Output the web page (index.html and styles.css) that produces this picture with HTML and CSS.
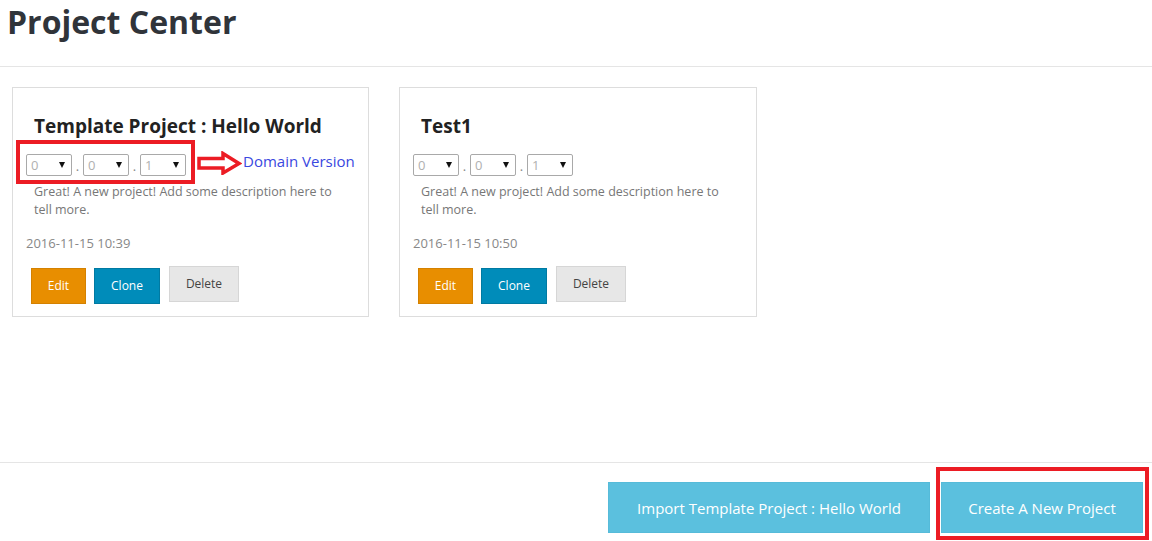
FILE: index.html
```html
<!DOCTYPE html>
<html>
<head>
<meta charset="utf-8">
<link rel="stylesheet" href="styles.css">
</head>
<body>
<div class="page">
  <header class="head">
    <h1 class="title">Project Center</h1>
  </header>
  <main class="projects">
    <div class="card">
      <h2 class="card-title">Template Project : Hello World</h2>
      <div class="version">
        <div class="sel"><span class="val">0</span><span class="tri"></span></div>
        <span class="dot">.</span>
        <div class="sel"><span class="val">0</span><span class="tri"></span></div>
        <span class="dot">.</span>
        <div class="sel"><span class="val">1</span><span class="tri"></span></div>
        <svg class="arrow" width="46" height="24" viewBox="0 0 46 24">
          <polygon points="3,7.5 27,7.5 27,2.5 43,12.5 27,22 27,17 3,17" fill="#fff" stroke="#ec1c24" stroke-width="3.5" stroke-linejoin="miter"/>
        </svg>
        <a class="domain">Domain Version</a>
      </div>
      <div class="mark mark-version"></div>
      <p class="desc">Great! A new project! Add some description here to tell more.</p>
      <div class="date">2016-11-15 10:39</div>
      <div class="actions">
        <a class="btn btn-edit">Edit</a>
        <a class="btn btn-clone">Clone</a>
        <button class="btn btn-delete">Delete</button>
      </div>
    </div>
    <div class="card">
      <h2 class="card-title">Test1</h2>
      <div class="version">
        <div class="sel"><span class="val">0</span><span class="tri"></span></div>
        <span class="dot">.</span>
        <div class="sel"><span class="val">0</span><span class="tri"></span></div>
        <span class="dot">.</span>
        <div class="sel"><span class="val">1</span><span class="tri"></span></div>
      </div>
      <p class="desc">Great! A new project! Add some description here to tell more.</p>
      <div class="date">2016-11-15 10:50</div>
      <div class="actions">
        <a class="btn btn-edit">Edit</a>
        <a class="btn btn-clone">Clone</a>
        <button class="btn btn-delete">Delete</button>
      </div>
    </div>
  </main>
  <footer class="foot">
    <button class="big big-import">Import Template Project : Hello World</button>
    <button class="big big-create">Create A New Project</button>
    <div class="mark mark-create"></div>
  </footer>
</div>
</body>
</html>
```
FILE: styles.css
```css
* { box-sizing: border-box; }
html, body { margin: 0; padding: 0; background: #fff; }
body { font-family: "Open Sans", "Liberation Sans", sans-serif; color: #333; }
.page { width: 1152px; height: 541px; position: relative; overflow: hidden; }

.head {
  height: 67px;
  border-bottom: 1px solid #e5e5e5;
  padding: 0 7px;
}
.title {
  margin: 0;
  font-size: 32px;
  font-weight: 700;
  line-height: 44px;
  color: #30343a;
}

.projects {
  height: 395px;
  padding: 20px 12px 0;
  display: flex;
  align-items: flex-start;
  gap: 30px;
}
.card {
  width: 357px;
  height: 230px;
  border: 1px solid #dddddd;
  padding: 24px 13px 0;
  position: relative;
}
.card + .card { width: 358px; }
.card-title {
  margin: 0 0 0 8px;
  font-size: 19px;
  line-height: 28px;
  font-weight: 700;
  color: #222;
}
.version {
  margin-top: 14px;
  height: 22px;
  display: flex;
  align-items: flex-start;
}
.sel {
  width: 46px;
  height: 22px;
  border: 1px solid #a9a9a9;
  border-radius: 2px;
  display: flex;
  align-items: center;
  justify-content: space-between;
  padding: 0 6px 0 4px;
  font-size: 13px;
  color: #b0b0b0;
}
.val { line-height: 20px; }
.tri {
  width: 0; height: 0;
  border-left: 3.5px solid transparent;
  border-right: 3.5px solid transparent;
  border-top: 6px solid #111;
}
.dot {
  width: 11px;
  text-align: center;
  font-size: 13px;
  line-height: 24px;
  color: #888;
}
.arrow { margin: -3px 0 0 10px; flex: none; }
.domain {
  margin: -3px 0 0 1px;
  font-size: 15px;
  line-height: 20px;
  color: #3a48e0;
  white-space: nowrap;
}
.mark {
  position: absolute;
  border: 4px solid #ec1c24;
}
.mark-version { left: 3px; top: 52px; width: 179px; height: 44px; }

.desc {
  margin: 7px 0 0;
  padding: 0 8px;
  font-size: 12.5px;
  line-height: 18px;
  color: #777;
}
.date {
  margin-top: 15px;
  font-size: 13px;
  line-height: 18px;
  color: #888;
}
.actions {
  margin-top: 14px;
  padding-left: 5px;
  display: flex;
  align-items: flex-start;
  gap: 8px;
}
.btn {
  height: 36px;
  padding: 0;
  border: 1px solid;
  font-family: inherit;
  font-size: 12px;
  line-height: 34px;
  text-align: center;
  display: block;
}
.btn-edit { background: #e88e00; border-color: #d48100; color: #fff; margin-top: 2px; width: 55px; }
.btn-clone { background: #008cba; border-color: #007aa2; color: #fff; margin-top: 2px; width: 66px; }
.btn-delete { background: #e7e7e7; border-color: #d6d6d6; color: #444; width: 70px; margin-left: 1px; }

.foot {
  height: 79px;
  border-top: 1px solid #e5e5e5;
  padding: 19px 9px 0 0;
  display: flex;
  justify-content: flex-end;
  align-items: flex-start;
  gap: 11px;
  position: relative;
}
.big {
  height: 51px;
  padding: 0;
  background: #5bc0de;
  border: 1px solid #56bbd9;
  color: #fff;
  font-family: inherit;
  font-size: 15px;
  text-align: center;
}
.big-import { width: 322px; }
.big-create { width: 202px; }
.mark-create { right: 3px; top: 4px; width: 213px; height: 73px; }
```
